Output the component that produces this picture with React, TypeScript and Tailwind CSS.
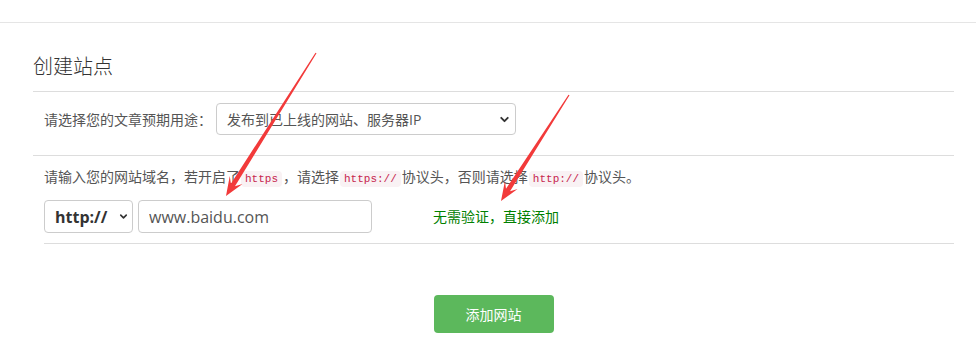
import { ChevronDown } from 'lucide-react';

type Pt = [number, number];

// tapered annotation arrow, from tail to tip
function arrowPoints(tail: Pt, tip: Pt) {
  const dx = tip[0] - tail[0];
  const dy = tip[1] - tail[1];
  const len = Math.hypot(dx, dy);
  const ux = dx / len;
  const uy = dy / len;
  const nx = -uy;
  const ny = ux;
  const at = (back: number, side: number): string =>
    `${tip[0] - ux * back + nx * side},${tip[1] - uy * back + ny * side}`;
  return [
    at(len, 0.6),
    at(13, 2.4),
    at(19, 7.5),
    at(0, 0),
    at(19, -7.5),
    at(13, -2.4),
    at(len, -0.6),
  ].join(' ');
}

function Code({ children }: { children: string }) {
  return (
    <code className="mx-[1px] rounded-[4px] bg-[#f9f2f4] px-[4px] py-[2px] font-['Liberation_Mono',monospace] text-[11px] text-[#c7254e]">
      {children}
    </code>
  );
}

export default function App() {
  return (
    <div className="relative h-[347px] w-[976px] overflow-hidden bg-white font-['Open_Sans','Noto_Sans_CJK_SC',sans-serif] text-[14px] text-[#555]">
      {/* TOP BAR */}
      <div className="h-[23px] border-b border-[#e5e5e5]" />

      <div className="pl-[33px] pr-[22px]">
        {/* TITLE */}
        <div className="border-b border-[#ddd] pt-[29px] pb-[9px]">
          <h2 className="text-[20px] leading-[30px] font-light text-[#333]">创建站点</h2>
        </div>

        {/* PURPOSE */}
        <div className="flex items-center border-b border-[#ddd] pt-[11px] pb-[20px] pl-[11px]">
          <span className="leading-[21px] text-[#555]">请选择您的文章预期用途：</span>
          <div className="relative ml-[4px] h-[32px] w-[300px]">
            <select
              defaultValue="online"
              className="h-full w-full appearance-none rounded-[4px] border border-[#ccc] bg-white pl-[10px] text-[14px] text-[#555] outline-none"
            >
              <option value="online">发布到已上线的网站、服务器IP</option>
            </select>
            <ChevronDown
              size={13}
              strokeWidth={3.5}
              className="pointer-events-none absolute top-[10px] right-[5px] text-[#333]"
            />
          </div>
        </div>

        {/* DOMAIN */}
        <div className="ml-[11px] border-b border-[#ddd] pt-[10px] pb-[10px]">
          <p className="leading-[21px]">
            请输入您的网站域名，若开启了<Code>https</Code>，请选择<Code>https://</Code>协议头，否则请选择
            <Code>http://</Code>协议头。
          </p>
          <div className="mt-[10px] flex items-center">
            <div className="relative h-[33px] w-[89px]">
              <select
                defaultValue="http"
                className="h-full w-full appearance-none rounded-[4px] border border-[#ccc] bg-white pl-[10px] text-[16px] font-bold text-[#333] outline-none"
              >
                <option value="http">http://</option>
                <option value="https">https://</option>
              </select>
              <ChevronDown
                size={11}
                strokeWidth={3.5}
                className="pointer-events-none absolute top-[11px] right-[4px] text-[#333]"
              />
            </div>
            <input
              defaultValue="www.baidu.com"
              className="ml-[5px] h-[33px] w-[234px] rounded-[4px] border border-[#ccc] px-[10px] text-[16px] text-[#555] outline-none"
            />
            <span className="ml-[61px] text-[#008000]">无需验证，直接添加</span>
          </div>
        </div>

        {/* SUBMIT */}
        <div className="flex justify-center pt-[51px]">
          <button className="h-[38px] w-[120px] rounded-[4px] bg-[#5cb85c] text-[14px] text-white">
            添加网站
          </button>
        </div>
      </div>

      {/* ANNOTATIONS */}
      <svg className="pointer-events-none absolute inset-0" width={976} height={347}>
        <polygon points={arrowPoints([316, 53], [226, 196])} fill="#f23a3a" />
        <polygon points={arrowPoints([569, 95], [501, 201])} fill="#f23a3a" />
      </svg>
    </div>
  );
}
